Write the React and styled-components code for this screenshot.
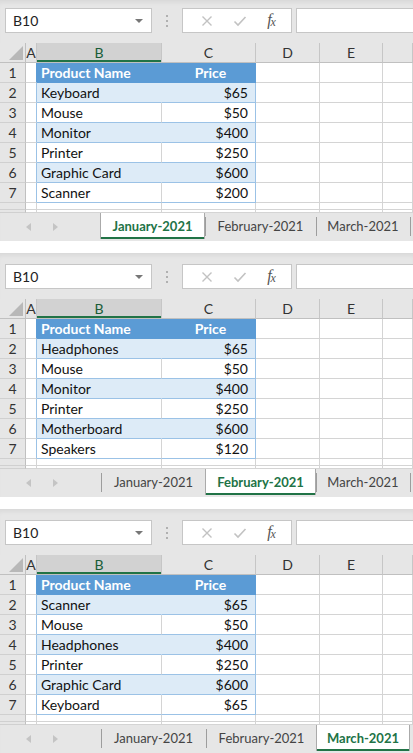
import styled, { createGlobalStyle } from 'styled-components';

const GlobalStyle = createGlobalStyle`
  body {
    margin: 0;
    background: #fff;
    font-family: Lato, "Liberation Sans", sans-serif;
  }
`;

const sheets = [
  {
    active: 0,
    rows: [
      ['Keyboard', '$65'],
      ['Mouse', '$50'],
      ['Monitor', '$400'],
      ['Printer', '$250'],
      ['Graphic Card', '$600'],
      ['Scanner', '$200'],
    ],
  },
  {
    active: 1,
    rows: [
      ['Headphones', '$65'],
      ['Mouse', '$50'],
      ['Monitor', '$400'],
      ['Printer', '$250'],
      ['Motherboard', '$600'],
      ['Speakers', '$120'],
    ],
  },
  {
    active: 2,
    rows: [
      ['Scanner', '$65'],
      ['Mouse', '$50'],
      ['Headphones', '$400'],
      ['Printer', '$250'],
      ['Graphic Card', '$600'],
      ['Keyboard', '$65'],
    ],
  },
];

const tabs = [
  { name: 'January-2021', width: 105 },
  { name: 'February-2021', width: 111 },
  { name: 'March-2021', width: 94 },
];

const GRID = '#d4d4d4';
const BAND = '#ddebf7';
const TBORDER = '#9bc2e6';
const THEAD = '#5b9bd5';
const GREEN = '#217346';

const Page = styled.div`
  display: flex;
  flex-direction: column;
  gap: 12px;
`;

const Panel = styled.div`
  background: #e6e6e6;
  padding-top: ${(p) => p.$top}px;
  overflow: hidden;
  box-shadow: inset 0 5px 5px -3px rgba(0, 0, 0, 0.07);
`;

const FormulaBar = styled.div`
  display: flex;
  align-items: stretch;
  height: 25px;
  padding-left: 5px;
`;

const NameBox = styled.div`
  width: 147px;
  box-sizing: border-box;
  background: #fff;
  border: 1px solid #c6c6c6;
  display: flex;
  align-items: center;
  justify-content: space-between;
  padding: 0 8px 0 7px;
  font-size: 14px;
  color: #222;
`;

const DropArrow = styled.span`
  width: 0;
  height: 0;
  border-left: 4px solid transparent;
  border-right: 4px solid transparent;
  border-top: 4px solid #777;
`;

const Dots = styled.div`
  width: 30px;
  display: flex;
  flex-direction: column;
  align-items: center;
  justify-content: center;
  gap: 3px;

  span {
    width: 2px;
    height: 2px;
    background: #b0b0b0;
  }
`;

const ActionBox = styled.div`
  width: 110px;
  box-sizing: border-box;
  background: #fff;
  border: 1px solid #c6c6c6;
  display: flex;
  align-items: center;
  justify-content: space-around;
  padding: 0 6px 0 8px;
`;

const Fx = styled.span`
  font-family: "Liberation Serif", serif;
  font-style: italic;
  font-size: 16px;
  color: #555;
  letter-spacing: -1px;

  sub {
    font-size: 12px;
    vertical-align: -1px;
  }
`;

const FormulaInput = styled.div`
  flex: 1;
  margin-left: 4px;
  margin-right: -10px;
  background: #fff;
  border: 1px solid #c6c6c6;
`;

const Grid = styled.div`
  margin-top: 10px;
  display: grid;
  grid-template-columns: 26px 11px 125px 94px 64px 63px 1fr;
  grid-template-rows: 20px repeat(7, 20px) 7px 3px;
  background: #fff;
  font-size: 14px;
`;

const Corner = styled.div`
  background: #e6e6e6;
  border-right: 1px solid #c0c0c0;
  border-bottom: 1px solid #c0c0c0;
  display: flex;
  align-items: flex-end;
  justify-content: flex-end;
  padding: 0 2px 2px 0;
`;

const ColHead = styled.div`
  box-sizing: border-box;
  background: ${(p) => (p.$selected ? '#d2d2d2' : '#e6e6e6')};
  border-right: 1px solid #c6c6c6;
  border-bottom: 1px solid #c0c0c0;
  box-shadow: ${(p) => (p.$selected ? `inset 0 -2px 0 ${GREEN}` : 'none')};
  color: ${(p) => (p.$selected ? '#185c37' : '#333')};
  display: flex;
  align-items: center;
  justify-content: center;
  overflow: hidden;
`;

const RowHead = styled.div`
  box-sizing: border-box;
  background: #e6e6e6;
  border-right: 1px solid #c0c0c0;
  border-bottom: 1px solid #d0d0d0;
  color: #333;
  display: flex;
  align-items: center;
  justify-content: center;
`;

const Cell = styled.div`
  box-sizing: border-box;
  background: ${(p) => p.$bg || '#fff'};
  border-right: 1px solid ${(p) => p.$right || GRID};
  border-bottom: 1px solid ${(p) => p.$bottom || GRID};
  color: ${(p) => p.$color || '#111'};
  font-weight: ${(p) => (p.$bold ? 700 : 400)};
  display: flex;
  align-items: center;
  justify-content: ${(p) => p.$align || 'flex-start'};
  padding: ${(p) => (p.$align === 'flex-end' ? '0 7px 0 0' : '0 0 0 4px')};
  white-space: nowrap;
  overflow: hidden;
`;

const TabBar = styled.div`
  display: flex;
  height: 28px;
  align-items: flex-start;
`;

const Nav = styled.div`
  width: 101px;
  height: 100%;
  display: flex;
  align-items: center;
  padding-left: 26px;
  box-sizing: border-box;
  gap: 22px;
`;

const Arrow = styled.span`
  width: 0;
  height: 0;
  border-top: 4px solid transparent;
  border-bottom: 4px solid transparent;
  ${(p) =>
    p.$dir === 'left'
      ? 'border-right: 5px solid #c4c4c4;'
      : 'border-left: 5px solid #c4c4c4;'}
`;

const Tab = styled.div`
  position: relative;
  width: ${(p) => p.$width}px;
  box-sizing: border-box;
  height: ${(p) => (p.$active ? 26 : 28)}px;
  display: flex;
  align-items: center;
  justify-content: center;
  padding-bottom: ${(p) => (p.$active ? 1 : 3)}px;
  font-size: 13px;
  color: ${(p) => (p.$active ? GREEN : '#444')};
  font-weight: ${(p) => (p.$active ? 700 : 400)};
  background: ${(p) => (p.$active ? '#fff' : 'transparent')};
  border-left: ${(p) => (p.$active ? '1px solid #aaa' : 'none')};
  border-right: ${(p) => (p.$active ? '1px solid #aaa' : 'none')};
  box-shadow: ${(p) => (p.$active ? `inset 0 -2px 0 ${GREEN}` : 'none')};
  margin-left: ${(p) => (p.$active ? -1 : 0)}px;
  z-index: ${(p) => (p.$active ? 1 : 0)};

  &::before,
  &::after {
    content: '';
    position: absolute;
    top: 4px;
    bottom: 5px;
    width: 1px;
    background: #9d9d9d;
    display: ${(p) => (p.$active ? 'none' : 'block')};
  }

  &::before {
    left: 0;
  }

  &::after {
    right: -1px;
  }
`;

function CrossIcon() {
  return (
    <svg width="12" height="12" viewBox="0 0 12 12">
      <path d="M1.5 1.5 L10.5 10.5 M10.5 1.5 L1.5 10.5" stroke="#c2c2c2" strokeWidth="1.4" fill="none" />
    </svg>
  );
}

function CheckIcon() {
  return (
    <svg width="14" height="12" viewBox="0 0 14 12">
      <path d="M1.5 6.5 L5 10 L12.5 2" stroke="#c2c2c2" strokeWidth="1.6" fill="none" />
    </svg>
  );
}

function CornerTriangle() {
  return (
    <svg width="14" height="14" viewBox="0 0 14 14">
      <path d="M14 0 L14 14 L0 14 Z" fill="#b8b8b8" />
    </svg>
  );
}

function Sheet({ sheet, top }) {
  const letters = ['A', 'B', 'C', 'D', 'E', ''];
  return (
    <Panel $top={top}>
      <FormulaBar>
        <NameBox>
          B10
          <DropArrow />
        </NameBox>
        <Dots>
          <span />
          <span />
          <span />
        </Dots>
        <ActionBox>
          <CrossIcon />
          <CheckIcon />
          <Fx>
            f<sub>x</sub>
          </Fx>
        </ActionBox>
        <FormulaInput />
      </FormulaBar>

      <Grid>
        <Corner>
          <CornerTriangle />
        </Corner>
        {letters.map((l, i) => (
          <ColHead key={i} $selected={l === 'B'}>
            {l}
          </ColHead>
        ))}

        <RowHead>1</RowHead>
        <Cell $right={THEAD} />
        <Cell $bg={THEAD} $right={THEAD} $bottom={THEAD} $color="#fff" $bold>
          Product Name
        </Cell>
        <Cell $bg={THEAD} $right={THEAD} $bottom={THEAD} $color="#fff" $bold $align="center">
          Price
        </Cell>
        <Cell />
        <Cell />
        <Cell />

        {sheet.rows.map(([name, price], i) => {
          const band = i % 2 === 0;
          const bg = band ? BAND : '#fff';
          return [
            <RowHead key={`h${i}`}>{i + 2}</RowHead>,
            <Cell key={`a${i}`} $right={TBORDER} />,
            <Cell key={`b${i}`} $bg={bg} $right={band ? BAND : GRID} $bottom={TBORDER}>
              {name}
            </Cell>,
            <Cell key={`c${i}`} $bg={bg} $right={TBORDER} $bottom={TBORDER} $align="flex-end">
              {price}
            </Cell>,
            <Cell key={`d${i}`} />,
            <Cell key={`e${i}`} />,
            <Cell key={`f${i}`} />,
          ];
        })}

        {[8, 9].map((r) => [
          <RowHead key={`h${r}`} />,
          ...[0, 1, 2, 3, 4, 5].map((c) => <Cell key={`${r}-${c}`} />),
        ])}
      </Grid>

      <TabBar>
        <Nav>
          <Arrow $dir="left" />
          <Arrow $dir="right" />
        </Nav>
        {tabs.map((t, i) => (
          <Tab key={t.name} $width={t.width} $active={i === sheet.active}>
            {t.name}
          </Tab>
        ))}
      </TabBar>
    </Panel>
  );
}

export default function App() {
  return (
    <>
      <GlobalStyle />
      <Page>
        {sheets.map((s, i) => (
          <Sheet key={i} sheet={s} top={i === 0 ? 8 : 11} />
        ))}
      </Page>
    </>
  );
}
